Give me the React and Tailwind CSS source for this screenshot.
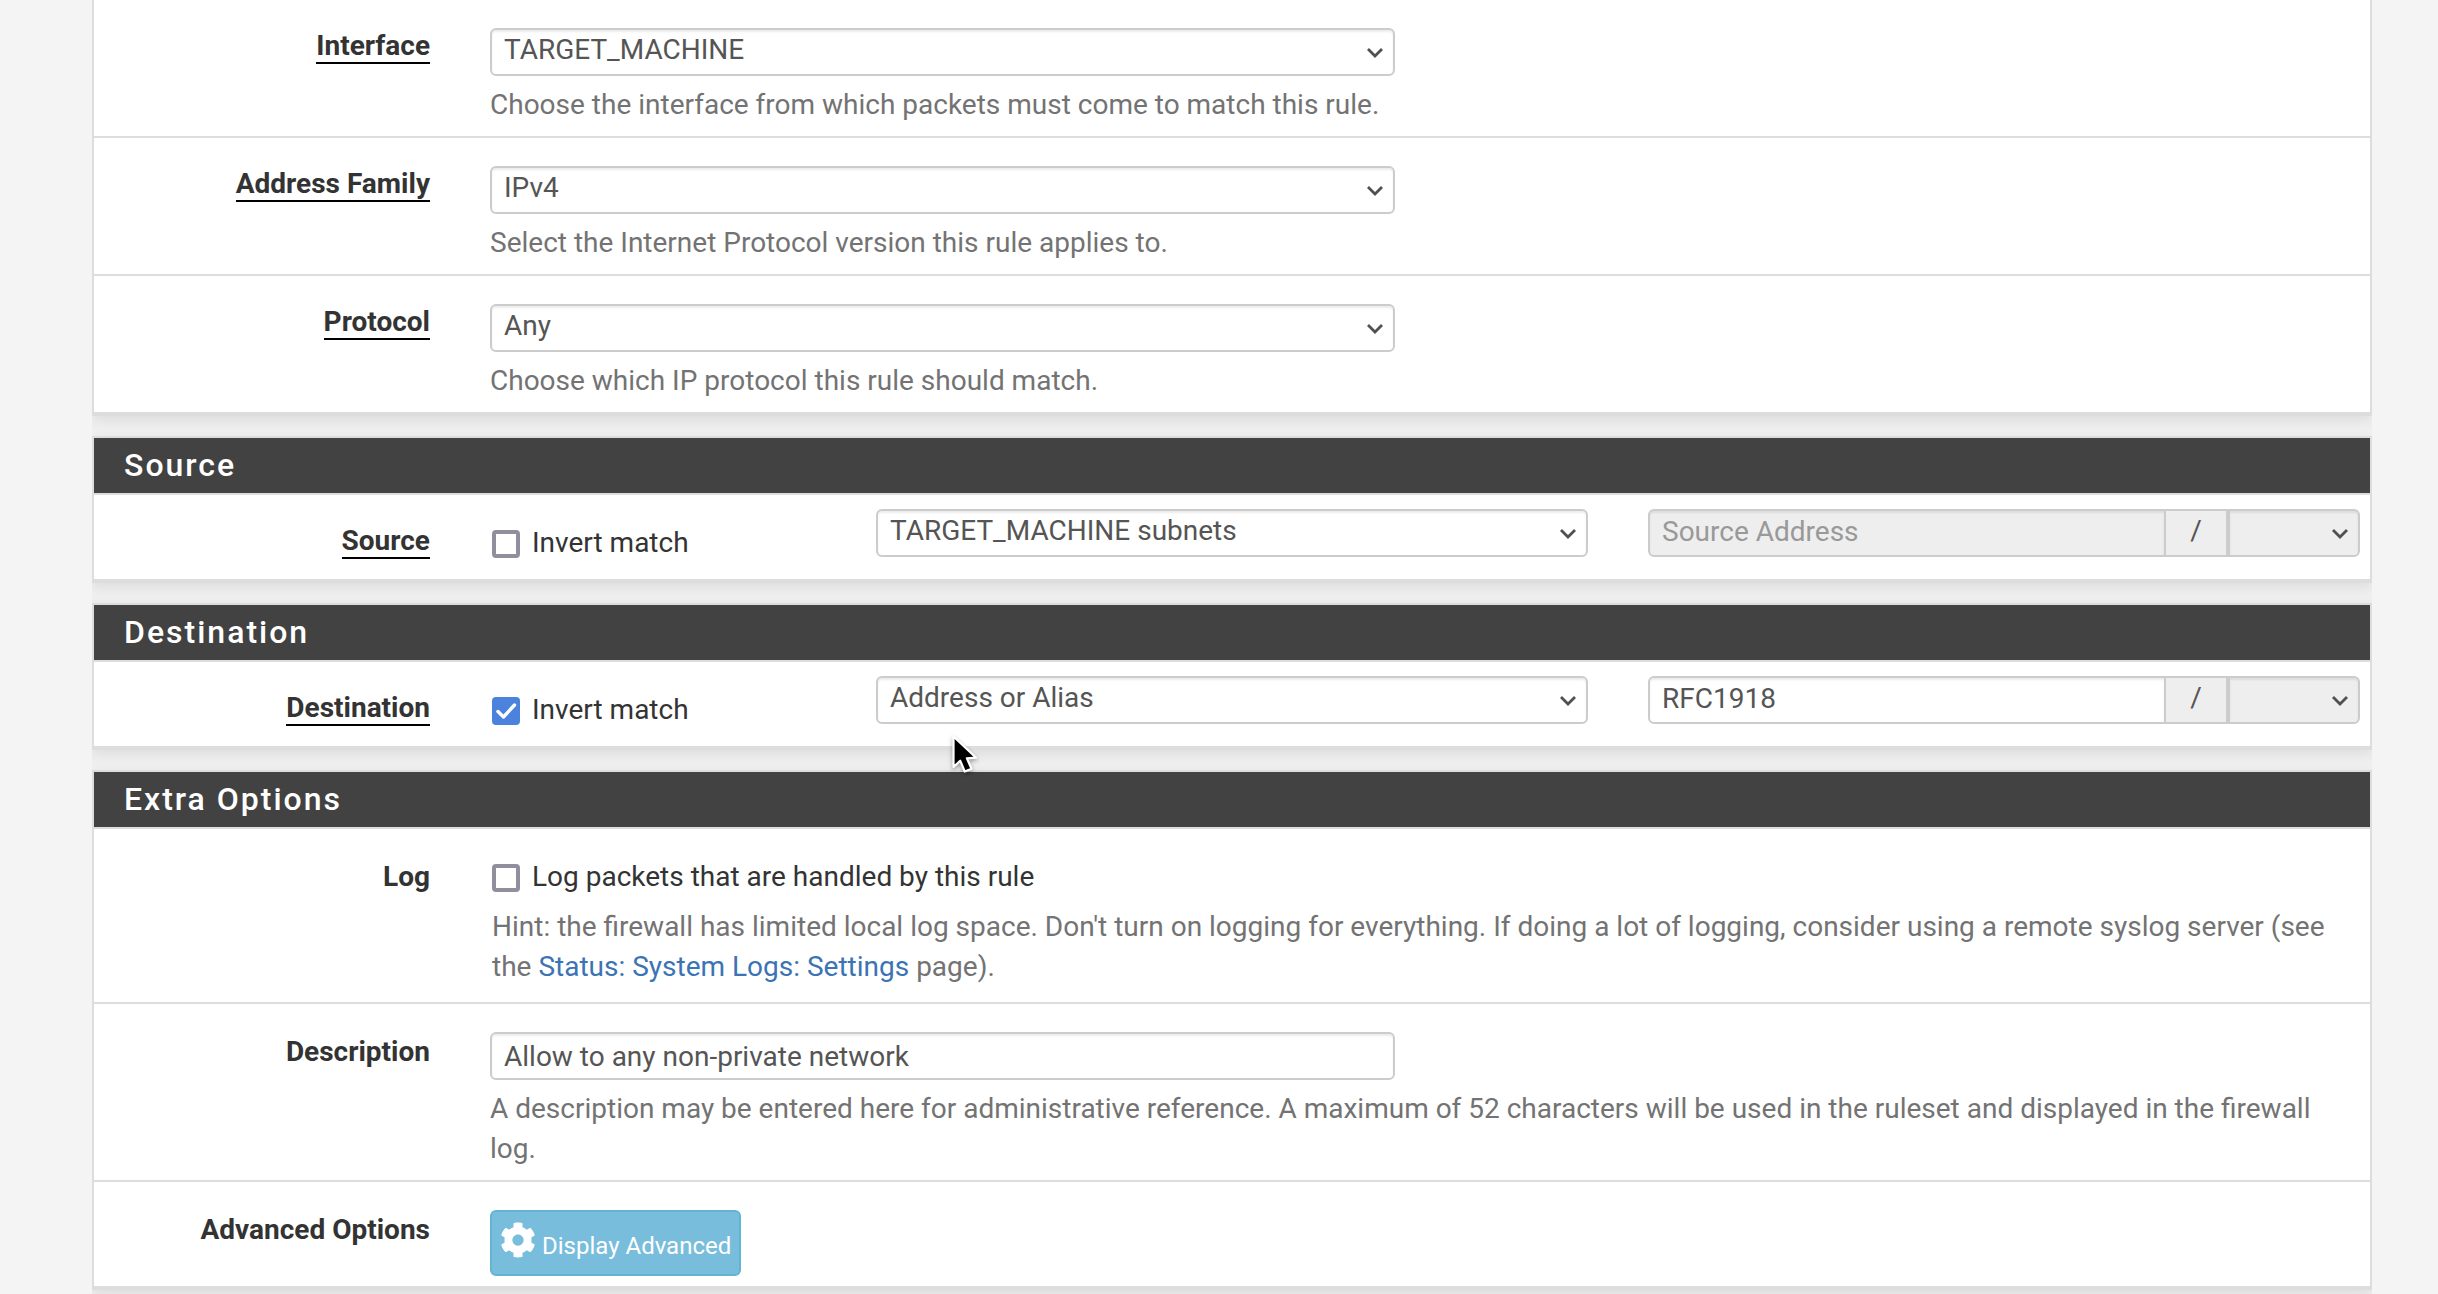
import { FaCog } from "react-icons/fa";

const control =
  "block h-12 w-full appearance-none rounded-md border-2 border-[#ccc] bg-white px-3 text-[28px] leading-10 text-[#555] shadow-[inset_0_2px_2px_rgba(0,0,0,0.075)] outline-none disabled:bg-[#eee] disabled:opacity-100 placeholder:text-[#999]";

function Select({ id, label, value, disabled, className = "" }) {
  return (
    <div className={"relative " + className}>
      <select id={id} aria-label={label} disabled={disabled} defaultValue={value} className={control + " pb-1" + (disabled ? " rounded-l-none" : "")}>
        <option value={value}>{value}</option>
      </select>
      <svg viewBox="0 0 16 10" className="pointer-events-none absolute top-5 right-3 h-[10px] w-4" fill="none" stroke="#505050" strokeWidth="2.8">
        <path d="M1 1l7 7 7-7" />
      </svg>
    </div>
  );
}

function Panel({ title, children }) {
  return (
    <section className={"mb-5 border-2 border-[#ddd] bg-white shadow-[0_4px_12px_rgba(0,0,0,0.08)] " + (title ? "" : "border-t-0")}>
      {title && (
        <h2 className="border-b-2 border-[#ddd] bg-[#424242] px-[30px] pb-px text-[32px] leading-[54px] font-medium tracking-[2px] text-white">{title}</h2>
      )}
      {children}
    </section>
  );
}

function Row({ label, htmlFor, underline, children }) {
  return (
    <div className="border-b-2 border-[#ddd]">
      <div className="-mx-5 grid grid-cols-12">
        <div className="col-span-2 px-[30px] pt-7 text-right text-[28px] leading-10 font-bold text-[#333]">
          <label htmlFor={htmlFor} className={underline ? "ml-auto mt-0.5 block w-fit border-b-2 border-black leading-8" : "block"}>
            {label}
          </label>
        </div>
        {children}
      </div>
    </div>
  );
}

function Help({ children }) {
  return <p className="pt-[9px] pb-[11px] text-[28px] leading-10 text-[#737373]">{children}</p>;
}

function Tick({ id, checked, children }) {
  return (
    <label htmlFor={id} className="flex items-center gap-3 pl-0.5 text-[28px] leading-10 text-[#333]">
      <span className="relative mt-0.5 size-7">
        <input id={id} type="checkbox" defaultChecked={checked} className="peer block size-7 appearance-none rounded-sm border-4 border-[#8f8f9d] bg-white checked:border-[#4a82dd] checked:bg-[#4a82dd]" />
        <svg viewBox="0 0 28 28" className="pointer-events-none absolute inset-0 hidden size-7 peer-checked:block" fill="none" stroke="#fff" strokeWidth="3.4" strokeLinecap="round" strokeLinejoin="round">
          <path d="M6 14.5l5.5 5.5L22.500 8" />
        </svg>
      </span>
      {children}
    </label>
  );
}

function Endpoint({ name, checked, kind, address }) {
  const id = name.toLowerCase();
  return (
    <Panel title={name}>
      <Row label={name} htmlFor={id + "-invert"} underline>
        <div className="col-span-2 px-[30px] pt-7 pb-4">
          <Tick id={id + "-invert"} checked={checked}>Invert match</Tick>
        </div>
        <div className="col-span-4 px-[30px] pt-3.5">
          <Select label={name + " type"} value={kind} />
        </div>
        <div className="col-span-4 flex items-start px-[30px] pt-3.5">
          <input type="text" aria-label={name + " Address"} placeholder={name + " Address"} defaultValue={address} disabled={!address} className={control + " min-w-0 flex-1 rounded-r-none pb-1"} />
          <span className="h-12 w-[62px] border-y-2 border-r-2 border-[#ccc] bg-[#eee] text-center text-[28px] leading-10 text-[#555]">/</span>
          <Select label={name + " mask"} value="" disabled className="w-[132px]" />
        </div>
      </Row>
    </Panel>
  );
}

const choices = [
  ["Interface", "TARGET_MACHINE", "Choose the interface from which packets must come to match this rule."],
  ["Address Family", "IPv4", "Select the Internet Protocol version this rule applies to."],
  ["Protocol", "Any", "Choose which IP protocol this rule should match."],
];

export default function App() {
  return (
    <main className="relative h-screen overflow-hidden bg-[#f4f4f4] pr-[66px] pl-[92px] font-[Roboto,sans-serif]">
      <div className="overflow-hidden bg-[#efefef]">
        <Panel>
          {choices.map(([name, value, help]) => (
            <Row key={name} label={name} htmlFor={name} underline>
              <div className="col-span-5 px-[30px] pt-7">
                <Select id={name} value={value} />
              </div>
              <div className="col-span-10 col-start-3 px-[30px]">
                <Help>{help}</Help>
              </div>
            </Row>
          ))}
        </Panel>
        <Endpoint name="Source" kind="TARGET_MACHINE subnets" />
        <Endpoint name="Destination" checked kind="Address or Alias" address="RFC1918" />
        <Panel title="Extra Options">
          <Row label="Log" htmlFor="log">
            <div className="col-span-10 px-[30px] pt-7 pb-1">
              <Tick id="log">Log packets that are handled by this rule</Tick>
              <div className="pt-px pl-0.5">
                <Help>
                  Hint: the firewall has limited local log space. Don't turn on logging for everything. If doing a lot of logging, consider using a remote syslog server (see the{" "}
                  <a href="#logs" className="text-[#3b74b5]">Status: System Logs: Settings</a> page).
                </Help>
              </div>
            </div>
          </Row>
          <Row label="Description" htmlFor="description">
            <div className="col-span-5 px-[30px] pt-7">
              <input id="description" type="text" defaultValue="Allow to any non-private network" className={control} />
            </div>
            <div className="col-span-10 col-start-3 px-[30px]">
              <Help>A description may be entered here for administrative reference. A maximum of 52 characters will be used in the ruleset and displayed in the firewall log.</Help>
            </div>
          </Row>
          <Row label="Advanced Options" htmlFor="advanced">
            <div className="col-span-10 px-[30px] pt-7 pb-2.5">
              <button id="advanced" type="button" className="flex items-end gap-1.5 rounded-md border-2 border-[#63b4d3] bg-[#78bddc] px-2 pt-2.5 pb-4 text-2xl text-white">
                <FaCog className="size-9" />
                <span className="leading-6">Display Advanced</span>
              </button>
            </div>
          </Row>
        </Panel>
      </div>
      <svg viewBox="0 0 28 44" className="pointer-events-none absolute top-[733px] left-[951px] h-11 w-7 drop-shadow-[0_2px_2px_rgba(0,0,0,0.35)]">
        <path d="M2.5 3.500V34l6.700-6.300 4.500 10.800 6.800-2.600-4.600-10.600 9.200-.6z" fill="#000" stroke="#fff" strokeWidth="2.2" strokeLinejoin="round" />
      </svg>
    </main>
  );
}
